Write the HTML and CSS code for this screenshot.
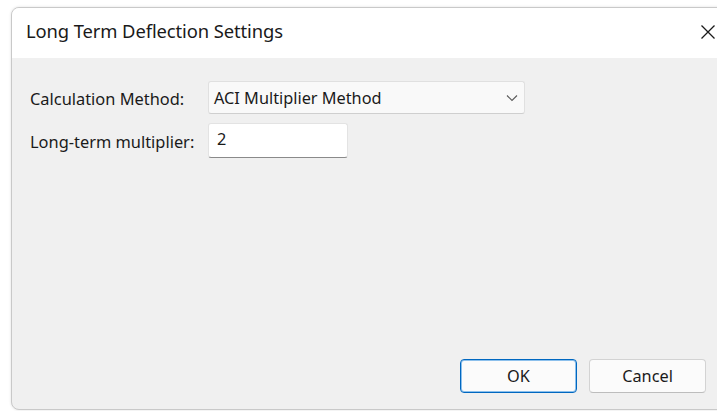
FILE: index.html
```html
<!DOCTYPE html>
<html>
<head>
<meta charset="utf-8">
<link rel="stylesheet" href="styles.css">
</head>
<body>
<div class="window">
  <div class="titlebar">
    <span class="title">Long Term Deflection Settings</span>
    <span class="close">
      <svg width="16" height="16" viewBox="0 0 16 16"><path d="M1.5 1.5 L14.5 14.5 M14.5 1.5 L1.5 14.5" stroke="#1a1a1a" stroke-width="1.3" fill="none"/></svg>
    </span>
  </div>
  <div class="content">
    <div class="form">
      <label class="label">Calculation Method:</label>
      <div class="combo">
        <span>ACI Multiplier Method</span>
        <svg class="chev" width="12" height="8" viewBox="0 0 12 8"><path d="M1 1.5 L6 6.5 L11 1.5" stroke="#5a5a5a" stroke-width="1.1" fill="none"/></svg>
      </div>
      <label class="label">Long-term multiplier:</label>
      <div class="input">2</div>
    </div>
    <div class="buttons">
      <button class="btn btn-default">OK</button>
      <button class="btn">Cancel</button>
    </div>
  </div>
</div>
</body>
</html>
```
FILE: styles.css
```css
html, body {
  margin: 0;
  height: 100%;
  background: #ffffff;
  overflow: hidden;
}
body {
  padding: 7px 0 0 11px;
  box-sizing: border-box;
  font-family: "Noto Sans", "Open Sans", sans-serif;
  color: #1a1a1a;
}
.window {
  width: 730px;
  height: 401px;
  border: 1px solid #c9c9c9;
  border-radius: 8px;
  overflow: hidden;
  display: flex;
  flex-direction: column;
  background: #f0f0f0;
  box-shadow: 0 0 3px rgba(0,0,0,0.12);
}
.titlebar {
  height: 50px;
  background: #ffffff;
  display: flex;
  align-items: center;
  padding-left: 14px;
  flex-shrink: 0;
}
.title {
  font-size: 18.4px;
  letter-spacing: -0.1px;
  margin-top: -5px;
}
.close {
  margin-left: auto;
  margin-right: 26px;
  margin-top: -3px;
  display: flex;
}
.content {
  flex: 1;
  display: flex;
  flex-direction: column;
  padding: 23px 0 0 18px;
}
.form {
  display: grid;
  grid-template-columns: 178px 317px;
  row-gap: 9px;
  align-items: center;
}
.label {
  font-size: 16.4px;
  padding-top: 2px;
}
.combo {
  height: 31px;
  background: #f9f9f9;
  border: 1px solid #e0e0e0;
  border-bottom-color: #cfcfcf;
  border-radius: 3px;
  display: flex;
  align-items: center;
  padding: 0 6px 0 5px;
  font-size: 16.3px;
}
.chev {
  margin-left: auto;
}
.input {
  width: 140px;
  height: 35px;
  box-sizing: border-box;
  background: #ffffff;
  border: 1px solid #e3e3e3;
  border-bottom: 1px solid #8a8a8a;
  border-radius: 3px;
  padding: 4px 0 0 8px;
  font-size: 16.3px;
}
.buttons {
  margin-top: auto;
  margin-bottom: 16px;
  display: flex;
  gap: 12px;
  padding-left: 430px;
}
.btn {
  width: 117px;
  height: 34px;
  font-family: "Noto Sans", "Open Sans", sans-serif;
  font-size: 16.3px;
  color: #1a1a1a;
  background: #fbfbfb;
  border: 1px solid #d3d3d3;
  border-bottom-color: #bdbdbd;
  border-radius: 4px;
}
.btn-default {
  border: 1px solid #0067c0;
  box-shadow: inset 0 0 0 1px #8cc0ec;
}
```
